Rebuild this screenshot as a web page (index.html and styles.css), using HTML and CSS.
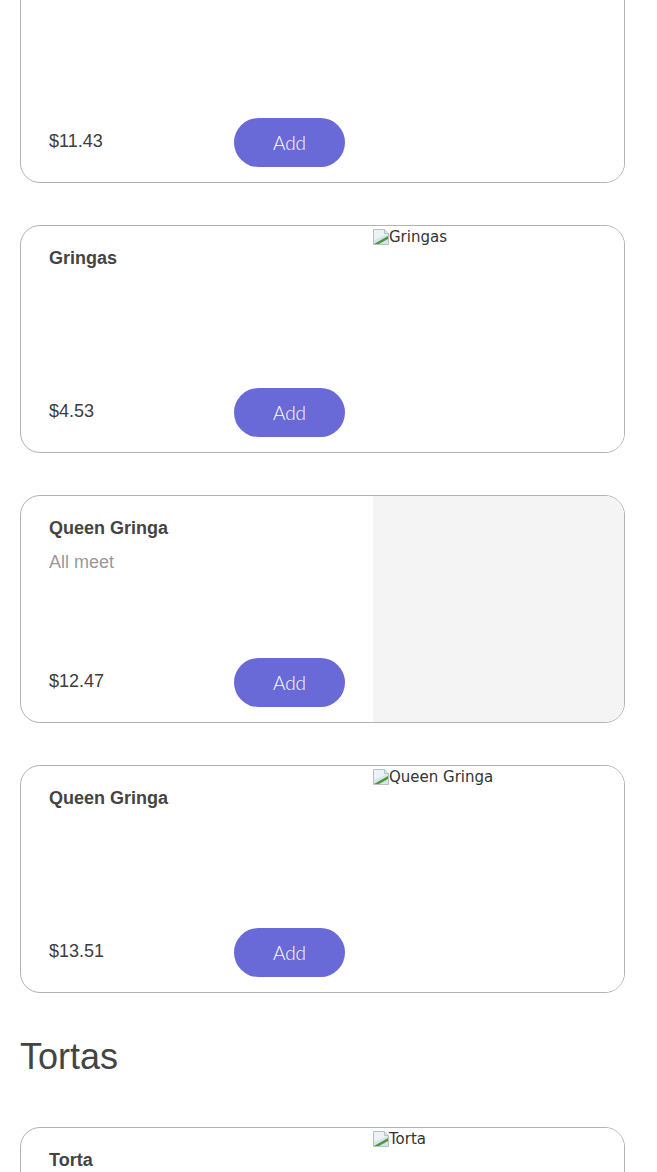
FILE: index.html
```html
<!DOCTYPE html>
<html lang="en">
<head>
  <meta charset="UTF-8" />
  <meta name="viewport" content="width=device-width, initial-scale=1.0"/>
  <title>Menu</title>
  <link rel="stylesheet" href="styles.css">
</head>
<body>
  <main class="menu">

    <div class="card">
      <div class="card-info">
        <h3 class="item-name">Gringa</h3>
        <div class="item-footer">
          <span class="price">$11.43</span>
          <button class="add-btn">Add</button>
        </div>
      </div>
      <div class="card-image"></div>
    </div>

    <div class="card">
      <div class="card-info">
        <h3 class="item-name">Gringas</h3>
        <div class="item-footer">
          <span class="price">$4.53</span>
          <button class="add-btn">Add</button>
        </div>
      </div>
      <div class="card-image">
        <span class="broken-img">
          <svg width="16" height="16" viewBox="0 0 16 16"><path d="M0.5 0.5h11l4 4v11h-15z" fill="#eef2f6" stroke="#b5c0cc"/><path d="M11.5 0.5v4h4" fill="#dfe6ee" stroke="#b5c0cc"/><path d="M1 15V11l14-6v10z" fill="#d6e4ef"/><path d="M1 15l14-8v3L6 15z" fill="#4f9a35"/></svg>Gringas
        </span>
      </div>
    </div>

    <div class="card">
      <div class="card-info">
        <h3 class="item-name">Queen Gringa</h3>
        <p class="item-desc">All meet</p>
        <div class="item-footer">
          <span class="price">$12.47</span>
          <button class="add-btn">Add</button>
        </div>
      </div>
      <div class="card-image placeholder"></div>
    </div>

    <div class="card">
      <div class="card-info">
        <h3 class="item-name">Queen Gringa</h3>
        <div class="item-footer">
          <span class="price">$13.51</span>
          <button class="add-btn">Add</button>
        </div>
      </div>
      <div class="card-image">
        <span class="broken-img">
          <svg width="16" height="16" viewBox="0 0 16 16"><path d="M0.5 0.5h11l4 4v11h-15z" fill="#eef2f6" stroke="#b5c0cc"/><path d="M11.5 0.5v4h4" fill="#dfe6ee" stroke="#b5c0cc"/><path d="M1 15V11l14-6v10z" fill="#d6e4ef"/><path d="M1 15l14-8v3L6 15z" fill="#4f9a35"/></svg>Queen Gringa
        </span>
      </div>
    </div>

    <h2 class="section-title">Tortas</h2>

    <div class="card">
      <div class="card-info">
        <h3 class="item-name">Torta</h3>
        <div class="item-footer">
          <span class="price">$9.86</span>
          <button class="add-btn">Add</button>
        </div>
      </div>
      <div class="card-image">
        <span class="broken-img">
          <svg width="16" height="16" viewBox="0 0 16 16"><path d="M0.5 0.5h11l4 4v11h-15z" fill="#eef2f6" stroke="#b5c0cc"/><path d="M11.5 0.5v4h4" fill="#dfe6ee" stroke="#b5c0cc"/><path d="M1 15V11l14-6v10z" fill="#d6e4ef"/><path d="M1 15l14-8v3L6 15z" fill="#4f9a35"/></svg>Torta
        </span>
      </div>
    </div>

  </main>
</body>
</html>
```

FILE: styles.css
```css
/* General */
body {
  margin: 0;
  padding: 0;
  background-color: #fff;
  color: #444;
  font-family: "Liberation Sans", Arial, sans-serif;
  overflow: hidden;
}

/* Menu list (page is scrolled a little) */
.menu {
  width: 605px;
  margin: -45px 0 0 20px;
}

/* Section heading */
.section-title {
  margin: 0 0 48px;
  font-size: 36px;
  line-height: 44px;
  font-weight: normal;
  color: #444;
}

/* Item card */
.card {
  display: grid;
  grid-template-columns: 1fr 251px;
  height: 228px;
  box-sizing: border-box;
  margin-bottom: 42px;
  border: 1px solid #b3b3b3;
  border-radius: 20px;
  overflow: hidden;
}

.card-info {
  display: flex;
  flex-direction: column;
  padding: 21px 28px 15px 28px;
}

.item-name {
  margin: 0;
  font-size: 18px;
  line-height: 22px;
  font-weight: bold;
  color: #444;
}

.item-desc {
  margin: 12px 0 0;
  font-size: 18px;
  line-height: 22px;
  color: #999;
}

.item-footer {
  margin-top: auto;
  display: flex;
  align-items: center;
  justify-content: space-between;
}

.price {
  padding-bottom: 3px;
  font-size: 18px;
  color: #3d3d3d;
}

.add-btn {
  width: 111px;
  height: 49px;
  border: none;
  border-radius: 25px;
  background-color: #6969d8;
  color: #fff;
  font-family: Lato, "Liberation Sans", sans-serif;
  font-weight: 300;
  font-size: 19px;
  cursor: pointer;
}

/* Image column */
.card-image {
  background-color: #fff;
}

.card-image.placeholder {
  background-color: #f4f4f4;
}

.broken-img {
  display: inline-flex;
  align-items: center;
  padding-top: 1px;
  font-family: "DejaVu Sans", sans-serif;
  font-size: 15px;
  line-height: 20px;
  color: #333;
}

.broken-img svg {
  flex-shrink: 0;
}
```
